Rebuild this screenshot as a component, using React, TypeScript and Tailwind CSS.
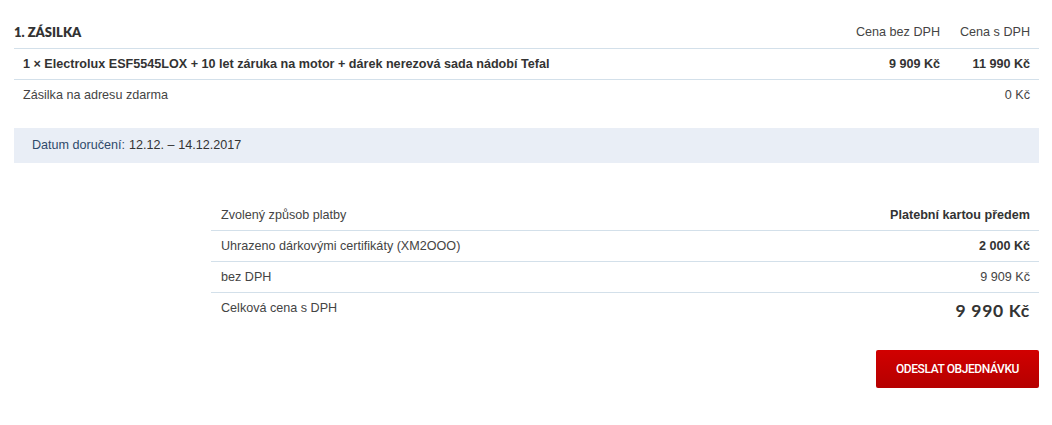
import React from "react";

const line = "border-b border-[#d3e0ea]";

export default function App() {
  return (
    <div className="w-[1052px] h-[425px] bg-white text-[12.6px] text-[#444] overflow-hidden" style={{ fontFamily: "'Liberation Sans', Arial, sans-serif" }}>
      <div className="pl-[14px] pr-[13px] pt-[16px]">
        <div className={`flex items-center h-[33px] pt-[1px] ${line}`}>
          <div className="flex-1 text-[#333] text-[13px]" style={{ fontFamily: "Lato, 'Open Sans', sans-serif", fontWeight: 800 }}>1. ZÁSILKA</div>
          <div className="w-[120px] text-right pr-[9px]">Cena bez DPH</div>
          <div className="w-[90px] text-right pr-[9px]">Cena s DPH</div>
        </div>
        <div className={`flex items-center h-[31px] ${line} font-bold text-[#333]`}>
          <div className="flex-1 pl-[9px]">1 × Electrolux ESF5545LOX + 10 let záruka na motor + dárek nerezová sada nádobí Tefal</div>
          <div className="w-[120px] text-right pr-[9px]">9 909 Kč</div>
          <div className="w-[90px] text-right pr-[9px]">11 990 Kč</div>
        </div>
        <div className="flex items-center h-[31px]">
          <div className="flex-1 pl-[9px]">Zásilka na adresu zdarma</div>
          <div className="w-[90px] text-right pr-[9px]">0 Kč</div>
        </div>
        <div className="mt-[17px] h-[35px] bg-[#e9eef6] flex items-center pl-[18px]">
          <span className="text-[#2f4a6b]">Datum doručení:</span>
          <span className="ml-[4px] text-[#333]">12.12. – 14.12.2017</span>
        </div>
        <div className="ml-[197px] mt-[37px]">
          <div className={`flex items-center h-[31px] ${line}`}>
            <div className="flex-1 pl-[10px]">Zvolený způsob platby</div>
            <div className="pr-[9px] font-bold text-[#333]">Platební kartou předem</div>
          </div>
          <div className={`flex items-center h-[31px] ${line}`}>
            <div className="flex-1 pl-[10px]">Uhrazeno dárkovými certifikáty (XM2OOO)</div>
            <div className="pr-[9px] font-bold text-[#333]">2 000 Kč</div>
          </div>
          <div className={`flex items-center h-[31px] ${line}`}>
            <div className="flex-1 pl-[10px]">bez DPH</div>
            <div className="pr-[9px]">9 909 Kč</div>
          </div>
          <div className="flex items-start h-[33px]">
            <div className="flex-1 pl-[10px] pt-[6px]">Celková cena s DPH</div>
            <div className="pr-[9px] pt-[8px] text-[17.5px] font-bold text-[#333] leading-[20px] tracking-[0.7px]" style={{ fontFamily: "Lato, 'Open Sans', sans-serif" }}>9 990 Kč</div>
          </div>
        </div>
        <div className="flex justify-end mt-[24px]">
          <button className="w-[163px] h-[38px] rounded-[2px] bg-gradient-to-b from-[#d10000] to-[#b50000] text-white text-[12px] tracking-[-0.4px]" style={{ fontFamily: "Roboto, 'Liberation Sans', sans-serif", fontWeight: 500 }}>ODESLAT OBJEDNÁVKU</button>
        </div>
      </div>
    </div>
  );
}
